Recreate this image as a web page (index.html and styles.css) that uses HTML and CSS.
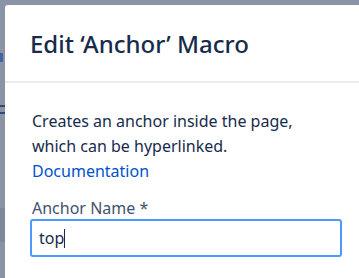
FILE: index.html
```html
<!DOCTYPE html>
<html lang="en">
<head>
	<meta charset="UTF-8" />
	<title>Edit Anchor Macro</title>
	<link rel="stylesheet" href="styles.css">
</head>
<body>
	<div class="dialog">
		<div class="dialogHeader">
			<h2 class="dialogTitle">Edit ‘Anchor’ Macro</h2>
		</div>
		<div class="dialogBody">
			<p class="desc">Creates an anchor inside the page, which can be hyperlinked.</p>
			<a class="docLink" href="###">Documentation</a>
			<label class="fieldLabel" for="anchorName">Anchor Name *</label>
			<div class="field" id="anchorName"><span>top</span><span class="caret"></span></div>
		</div>
	</div>
</body>
</html>
```

FILE: styles.css
```css
*{
	margin: 0;padding: 0;
	box-sizing: border-box;
}
html,body{
	width: 359px;height: 278px;
	overflow: hidden;
}
body{
	background-color: #8b94a6;
	/* bits of the page behind the blanket */
	background-image:
		linear-gradient(#3f66a0, #3f66a0),
		linear-gradient(#2e4a78, #2e4a78),
		linear-gradient(#2e4a78, #2e4a78),
		linear-gradient(#7f889b, #7f889b);
	background-size: 3px 9px, 5px 2px, 5px 2px, 5px 34px;
	background-position: 0 53px, 0 105px, 0 112px, 0 208px;
	background-repeat: no-repeat;
	font-family: "Noto Sans", "Open Sans", sans-serif;
	color: #172b4d;
	padding: 5px 0 0 5px;
}
.dialog{
	width: 354px;height: 273px;
	background: #fff;
	border-radius: 3px 0 0 0;
}
.dialogHeader{
	padding: 24px 25px 0;
	height: 78px;
	border-bottom: 2px solid #ebecf0;
}
.dialogTitle{
	font-size: 24px;
	font-weight: 500;
	line-height: 30px;
}
.dialogBody{
	padding: 26px 17px 0 25px;
	font-size: 16px;
	line-height: 25px;
}
.desc{
	max-width: 300px;
	padding-left: 2px;
}
.docLink{
	display: block;
	padding-left: 2px;
	color: #0052cc;
	text-decoration: none;
}
.fieldLabel{
	display: block;
	margin: 14px 0 1px;
	padding-left: 2px;
	line-height: 20px;
	color: #42526e;
}
.field{
	display: flex;
	align-items: center;
	height: 38px;
	padding: 0 7px;
	border: 2px solid #4c9aff;
	border-radius: 3px;
}
.caret{
	width: 1px;height: 19px;
	margin-top: 1px;
	background: #172b4d;
}
```
